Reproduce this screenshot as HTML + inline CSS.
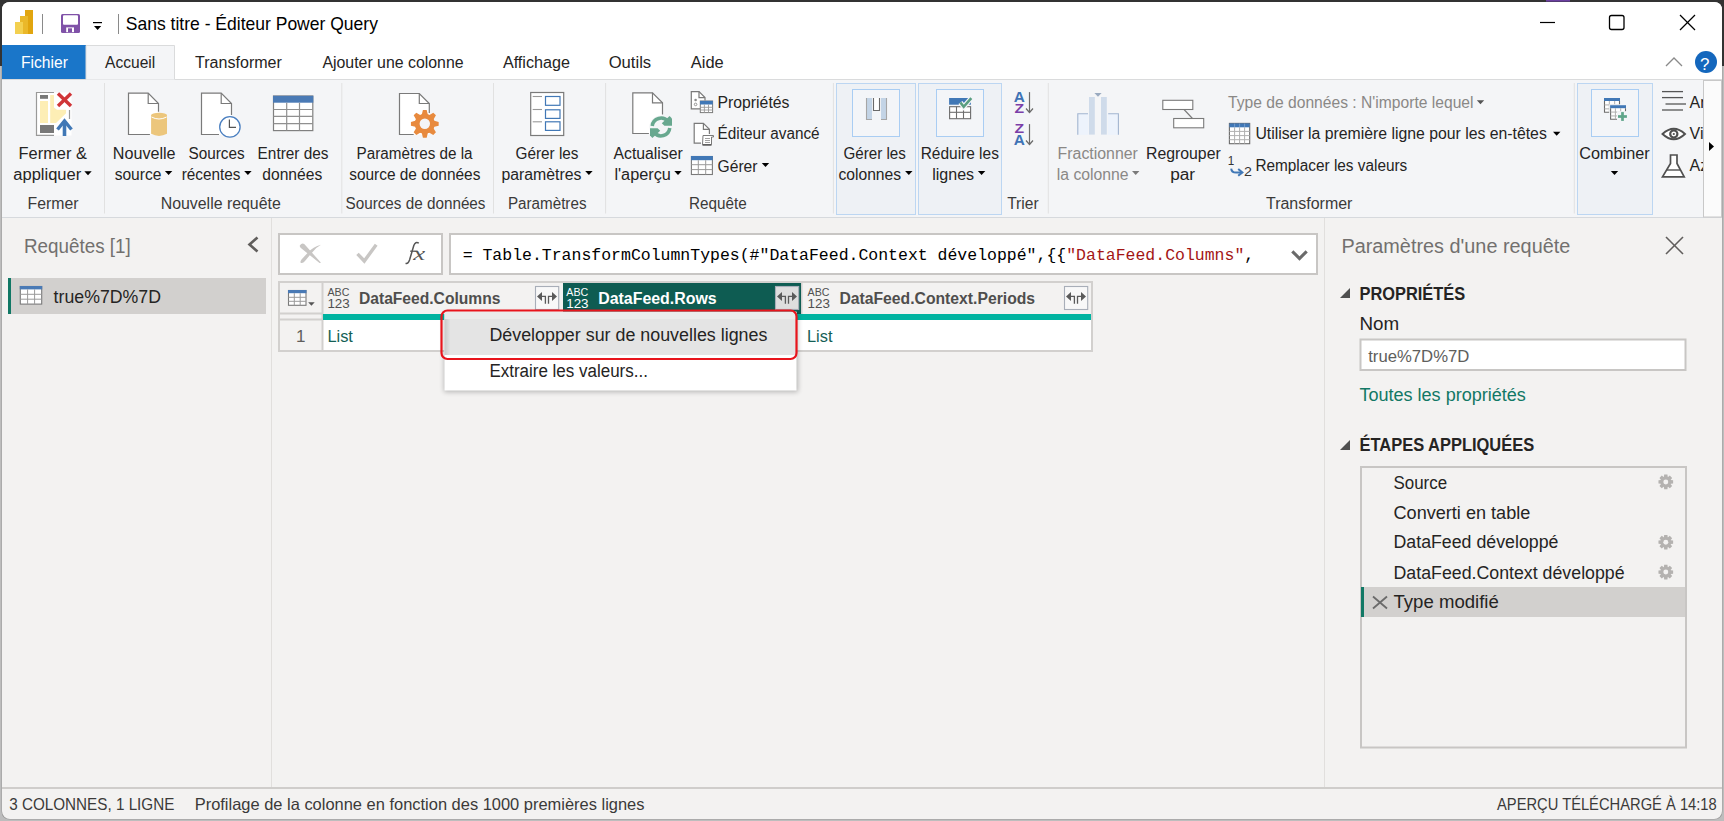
<!DOCTYPE html>
<html><head><meta charset="utf-8"><title>Power Query</title>
<style>
html,body{margin:0;padding:0;width:1724px;height:821px;overflow:hidden;background:#a9a9a9}
svg{display:block;font-family:"Liberation Sans", sans-serif}
</style></head><body>
<svg width="1724" height="821" viewBox="0 0 1724 821" fill="#252423">
<rect x="0" y="0" width="1724" height="821" fill="#bdbdbd" />
<rect x="0" y="0" width="1724" height="66" fill="#333333" />
<rect x="1546" y="0" width="24" height="1.6" fill="#6b3fa0" />
<path d="M1.5 66 L1.5 811 Q1.5 819.5 10 819.5 L1714 819.5 Q1722.5 819.5 1722.5 811 L1722.5 66 Z" fill="#9a9a9a" />
<rect x="2" y="2" width="1720" height="817" fill="#f3f2f1" rx="8" />
<path d="M2 10 Q2 2 10 2 L1714 2 Q1722 2 1722 10 L1722 79 L2 79 Z" fill="#ffffff" />
<rect x="2" y="79" width="1720" height="138" fill="#f4f5f7" />
<line x1="2" y1="79.5" x2="1722" y2="79.5" stroke="#dadbdc" stroke-width="1" />
<line x1="2" y1="217.5" x2="1722" y2="217.5" stroke="#d6d9dd" stroke-width="1" />
<rect x="25" y="10" width="8" height="24" fill="#e1a50f" />
<rect x="20" y="16" width="8" height="18" fill="#eab82a" />
<rect x="15" y="22" width="8" height="12" fill="#f3d050" />
<line x1="42.5" y1="14" x2="42.5" y2="34" stroke="#8a8a8a" stroke-width="1" />
<rect x="61" y="14" width="19" height="19" fill="#8052a8" rx="1.5" />
<rect x="63" y="15.2" width="15" height="9.6" fill="#ffffff" rx="1" />
<rect x="66.2" y="27.4" width="7.8" height="4.8" fill="#ffffff" />
<rect x="68" y="28.3" width="4" height="4" fill="#8052a8" />
<rect x="93" y="22" width="9" height="1.2" fill="#000" />
<path d="M94 26 L101.2 26 L97.6 30 Z" fill="#000" />
<line x1="118.5" y1="14" x2="118.5" y2="34" stroke="#8a8a8a" stroke-width="1" />
<text x="125.8" y="30.0" font-size="19" textLength="252.1" lengthAdjust="spacingAndGlyphs" fill="#000" >Sans titre - Éditeur Power Query</text>
<line x1="1540" y1="22.5" x2="1555" y2="22.5" stroke="#000" stroke-width="1.2" />
<rect x="1609.5" y="15.5" width="14.5" height="14" fill="none" stroke="#000" stroke-width="1.3" rx="2" />
<line x1="1680" y1="15" x2="1695" y2="30" stroke="#000" stroke-width="1.3" />
<line x1="1695" y1="15" x2="1680" y2="30" stroke="#000" stroke-width="1.3" />
<rect x="2" y="45" width="84" height="34" fill="#1a76c9" />
<rect x="86" y="45" width="88.5" height="34.5" fill="#f4f5f7" />
<path d="M86 79 L86 45.5 L174.5 45.5 L174.5 79" fill="none" stroke="#dadbdc" stroke-width="1" />
<text x="21.0" y="68.0" font-size="16" textLength="46.9" lengthAdjust="spacingAndGlyphs" fill="#ffffff" >Fichier</text>
<text x="105.1" y="68.0" font-size="16" textLength="50.1" lengthAdjust="spacingAndGlyphs" >Accueil</text>
<text x="195.0" y="68.0" font-size="16" textLength="86.9" lengthAdjust="spacingAndGlyphs" >Transformer</text>
<text x="322.4" y="68.0" font-size="16" textLength="141.2" lengthAdjust="spacingAndGlyphs" >Ajouter une colonne</text>
<text x="502.9" y="68.0" font-size="16" textLength="67.1" lengthAdjust="spacingAndGlyphs" >Affichage</text>
<text x="608.7" y="68.0" font-size="16" textLength="42.5" lengthAdjust="spacingAndGlyphs" >Outils</text>
<text x="690.8" y="68.0" font-size="16" textLength="32.9" lengthAdjust="spacingAndGlyphs" >Aide</text>
<path d="M1666 66 L1674 58 L1682 66" fill="none" stroke="#8a8a8a" stroke-width="1.3" />
<circle cx="1706" cy="62" r="11" fill="#1467bd"/>
<text x="1700.0" y="69.5" font-size="17" fill="#ffffff" >?</text>
<line x1="104.5" y1="83" x2="104.5" y2="213.5" stroke="#e1e1e1" stroke-width="1" />
<line x1="341.8" y1="83" x2="341.8" y2="213.5" stroke="#e1e1e1" stroke-width="1" />
<line x1="493.5" y1="83" x2="493.5" y2="213.5" stroke="#e1e1e1" stroke-width="1" />
<line x1="605.6" y1="83" x2="605.6" y2="213.5" stroke="#e1e1e1" stroke-width="1" />
<line x1="833.4" y1="83" x2="833.4" y2="213.5" stroke="#e1e1e1" stroke-width="1" />
<line x1="1048.3" y1="83" x2="1048.3" y2="213.5" stroke="#e1e1e1" stroke-width="1" />
<line x1="1574.3" y1="83" x2="1574.3" y2="213.5" stroke="#e1e1e1" stroke-width="1" />
<text x="18.6" y="158.8" font-size="16" textLength="68.3" lengthAdjust="spacingAndGlyphs" >Fermer &amp;</text>
<text x="13.3" y="179.5" font-size="16" textLength="67.9" lengthAdjust="spacingAndGlyphs" >appliquer</text>
<path d="M84.3 171.3 L91.7 171.3 L88.0 175.3 Z" fill="#000" />
<text x="27.6" y="208.6" font-size="16" textLength="50.9" lengthAdjust="spacingAndGlyphs" fill="#3b3a39" >Fermer</text>
<text x="112.8" y="158.8" font-size="16" textLength="62.8" lengthAdjust="spacingAndGlyphs" >Nouvelle</text>
<text x="114.7" y="179.5" font-size="16" textLength="46.7" lengthAdjust="spacingAndGlyphs" >source</text>
<path d="M164.9 171.1 L172.3 171.1 L168.6 175.1 Z" fill="#000" />
<text x="188.5" y="158.8" font-size="16" textLength="56.1" lengthAdjust="spacingAndGlyphs" >Sources</text>
<text x="181.7" y="179.5" font-size="16" textLength="58.7" lengthAdjust="spacingAndGlyphs" >récentes</text>
<path d="M244.2 171.1 L251.6 171.1 L247.9 175.1 Z" fill="#000" />
<text x="257.6" y="158.8" font-size="16" textLength="70.9" lengthAdjust="spacingAndGlyphs" >Entrer des</text>
<text x="262.3" y="179.5" font-size="16" textLength="59.9" lengthAdjust="spacingAndGlyphs" >données</text>
<text x="160.7" y="208.6" font-size="16" textLength="120.1" lengthAdjust="spacingAndGlyphs" fill="#3b3a39" >Nouvelle requête</text>
<text x="356.6" y="158.8" font-size="16" textLength="116.0" lengthAdjust="spacingAndGlyphs" >Paramètres de la</text>
<text x="349.2" y="179.5" font-size="16" textLength="131.2" lengthAdjust="spacingAndGlyphs" >source de données</text>
<text x="345.5" y="208.6" font-size="16" textLength="140.0" lengthAdjust="spacingAndGlyphs" fill="#3b3a39" >Sources de données</text>
<text x="515.5" y="158.8" font-size="16" textLength="63.0" lengthAdjust="spacingAndGlyphs" >Gérer les</text>
<text x="501.4" y="179.5" font-size="16" textLength="80.0" lengthAdjust="spacingAndGlyphs" >paramètres</text>
<path d="M585.2 171.1 L592.6 171.1 L588.9 175.1 Z" fill="#000" />
<text x="507.9" y="208.6" font-size="16" textLength="78.6" lengthAdjust="spacingAndGlyphs" fill="#3b3a39" >Paramètres</text>
<text x="613.5" y="158.8" font-size="16" textLength="69.3" lengthAdjust="spacingAndGlyphs" >Actualiser</text>
<text x="614.4" y="179.5" font-size="16" textLength="56.5" lengthAdjust="spacingAndGlyphs" >l&#x27;aperçu</text>
<path d="M674.3 171.1 L681.7 171.1 L678.0 175.1 Z" fill="#000" />
<text x="717.6" y="107.9" font-size="16" textLength="71.8" lengthAdjust="spacingAndGlyphs" >Propriétés</text>
<text x="717.6" y="139.4" font-size="16" textLength="102.0" lengthAdjust="spacingAndGlyphs" >Éditeur avancé</text>
<text x="717.6" y="171.5" font-size="16" textLength="39.9" lengthAdjust="spacingAndGlyphs" >Gérer</text>
<path d="M761.8 163 L769.2 163 L765.5 167 Z" fill="#000" />
<text x="689.0" y="208.6" font-size="16" textLength="57.7" lengthAdjust="spacingAndGlyphs" fill="#3b3a39" >Requête</text>
<rect x="836.5" y="83.5" width="79" height="131" fill="#eef1f5" stroke="#bcd6f2" stroke-width="1" />
<rect x="918.5" y="83.5" width="83" height="131" fill="#eef1f5" stroke="#bcd6f2" stroke-width="1" />
<rect x="852.5" y="89.5" width="47" height="47" fill="#f3f5f8" stroke="#a9cdf3" stroke-width="1" />
<rect x="936.5" y="89.5" width="47" height="47" fill="#f3f5f8" stroke="#a9cdf3" stroke-width="1" />
<text x="843.5" y="158.8" font-size="16" textLength="62.4" lengthAdjust="spacingAndGlyphs" >Gérer les</text>
<text x="838.4" y="179.5" font-size="16" textLength="62.7" lengthAdjust="spacingAndGlyphs" >colonnes</text>
<path d="M905.1 171.1 L912.5 171.1 L908.8 175.1 Z" fill="#000" />
<text x="920.7" y="158.8" font-size="16" textLength="78.2" lengthAdjust="spacingAndGlyphs" >Réduire les</text>
<text x="932.2" y="179.5" font-size="16" textLength="41.9" lengthAdjust="spacingAndGlyphs" >lignes</text>
<path d="M977.9 171.1 L985.3 171.1 L981.6 175.1 Z" fill="#000" />
<text x="1007.2" y="208.6" font-size="16" textLength="31.4" lengthAdjust="spacingAndGlyphs" fill="#3b3a39" >Trier</text>
<text x="1057.6" y="158.8" font-size="16" textLength="80.3" lengthAdjust="spacingAndGlyphs" fill="#8a8886" >Fractionner</text>
<text x="1056.8" y="179.5" font-size="16" textLength="71.8" lengthAdjust="spacingAndGlyphs" fill="#8a8886" >la colonne</text>
<path d="M1132.0 171.1 L1139.4 171.1 L1135.7 175.1 Z" fill="#7a7a7a" />
<text x="1146.0" y="158.8" font-size="16" textLength="74.7" lengthAdjust="spacingAndGlyphs" >Regrouper</text>
<text x="1170.2" y="179.5" font-size="16" textLength="24.9" lengthAdjust="spacingAndGlyphs" >par</text>
<text x="1228.1" y="107.8" font-size="16" textLength="245.4" lengthAdjust="spacingAndGlyphs" fill="#8a8886" >Type de données : N&#x27;importe lequel</text>
<path d="M1476.8 100.2 L1484.2 100.2 L1480.5 104.2 Z" fill="#555" />
<text x="1255.4" y="139.4" font-size="16" textLength="291.4" lengthAdjust="spacingAndGlyphs" >Utiliser la première ligne pour les en-têtes</text>
<path d="M1553.0 131.8 L1560.4 131.8 L1556.7 135.8 Z" fill="#000" />
<text x="1255.4" y="171.4" font-size="16" textLength="151.9" lengthAdjust="spacingAndGlyphs" >Remplacer les valeurs</text>
<text x="1266.0" y="208.6" font-size="16" textLength="86.4" lengthAdjust="spacingAndGlyphs" fill="#3b3a39" >Transformer</text>
<rect x="1577.5" y="83.5" width="75" height="131" fill="#eef1f5" stroke="#bcd6f2" stroke-width="1" />
<rect x="1591.5" y="89.5" width="47" height="47" fill="#f3f5f8" stroke="#a9cdf3" stroke-width="1" />
<text x="1579.3" y="158.8" font-size="16" textLength="70.4" lengthAdjust="spacingAndGlyphs" >Combiner</text>
<path d="M1610.8 171 L1618.2 171 L1614.5 175 Z" fill="#000" />
<clipPath id="cr"><rect x="1686" y="80" width="17.5" height="137"/></clipPath>
<g clip-path="url(#cr)">
<text x="1689.6" y="107.8" font-size="16" >Analyser</text>
<text x="1689.6" y="139.4" font-size="16" >Vision</text>
<text x="1689.6" y="171.4" font-size="16" >Azure</text>
</g>
<rect x="1703.5" y="80.5" width="18" height="136.5" fill="#fbfbfb" stroke="#c8c8c8" stroke-width="1" />
<path d="M1709 142 L1714 146.5 L1709 151 Z" fill="#000" />
<rect x="36.5" y="92.5" width="35" height="43" fill="#ffffff" />
<path d="M54 92.5 L36.5 92.5 L36.5 135.3 L54 135.3" fill="none" stroke="#999" stroke-width="1.2" />
<line x1="69.5" y1="110" x2="69.5" y2="119" stroke="#999" stroke-width="1.2" />
<rect x="40" y="95" width="8" height="3.8" fill="#787878" />
<rect x="40" y="101" width="8" height="22" fill="#fdeeb5" />
<path d="M50.2 95 L54 95 L54 107.5 L57 109.8 L66.1 109.8 L66.1 113.3 L56 122.9 L50.2 122.9 Z" fill="#fdeeb5" />
<rect x="40" y="125" width="14" height="8" fill="#787878" />
<line x1="58" y1="93.5" x2="71" y2="106" stroke="#d03538" stroke-width="3.4" />
<line x1="71" y1="93.5" x2="58" y2="106" stroke="#d03538" stroke-width="3.4" />
<path d="M57.5 129.5 L64.5 121 L71.5 129.5" fill="none" stroke="#4178b6" stroke-width="3.4" />
<line x1="64.5" y1="122" x2="64.5" y2="136" stroke="#4178b6" stroke-width="3.6" />
<path d="M128.5 93.2 L148.2 93.2 L158.5 103.5 L158.5 134.5 L128.5 134.5 Z" fill="#ffffff" />
<path d="M149.9 134.5 L128.5 134.5 L128.5 93.2 L148.2 93.2 L158.5 103.5 L158.5 111.7" fill="none" stroke="#7a7a7a" stroke-width="1.2" />
<path d="M148.2 93.2 L148.2 103.5 L158.5 103.5" fill="none" stroke="#7a7a7a" stroke-width="1.2" />
<path d="M151.1 115.3 L151.1 133.8 Q159 138 167 133.8 L167 115.3 Z" fill="#ecc67c" />
<ellipse cx="159.05" cy="115.3" rx="7.95" ry="2.6" fill="#ecc67c"/>
<path d="M151.5 117 Q159 121 166.6 117" fill="none" stroke="#ffffff" stroke-width="1" />
<path d="M201.5 93.2 L221.2 93.2 L231.5 103.5 L231.5 134.5 L201.5 134.5 Z" fill="#ffffff" />
<path d="M219 134.5 L201.5 134.5 L201.5 93.2 L221.2 93.2 L231.5 103.5 L231.5 115" fill="none" stroke="#7a7a7a" stroke-width="1.2" />
<path d="M221.2 93.2 L221.2 103.5 L231.5 103.5" fill="none" stroke="#7a7a7a" stroke-width="1.2" />
<circle cx="229.9" cy="126.9" r="10.2" fill="#ffffff" stroke="#4a7fc0" stroke-width="1.3"/>
<path d="M229.4 119.5 L229.4 127.4 L236 127.4" fill="none" stroke="#555" stroke-width="1.2" />
<rect x="273.5" y="96" width="39.3" height="34.6" fill="#ffffff" stroke="#808080" stroke-width="1.2" />
<rect x="273" y="95.8" width="40.3" height="6.9" fill="#4a7ab5" />
<line x1="286.7" y1="102.7" x2="286.7" y2="130.6" stroke="#909090" stroke-width="1.2" />
<line x1="299.5" y1="102.7" x2="299.5" y2="130.6" stroke="#909090" stroke-width="1.2" />
<line x1="273.5" y1="109.5" x2="312.8" y2="109.5" stroke="#909090" stroke-width="1.2" />
<line x1="273.5" y1="116.4" x2="312.8" y2="116.4" stroke="#909090" stroke-width="1.2" />
<line x1="273.5" y1="123.7" x2="312.8" y2="123.7" stroke="#909090" stroke-width="1.2" />
<path d="M399.5 93.5 L419.3 93.5 L429.3 103.5 L429.3 134.5 L399.5 134.5 Z" fill="#ffffff" />
<path d="M413.7 134.5 L399.5 134.5 L399.5 93.5 L419.3 93.5 L429.3 103.5 L429.3 113" fill="none" stroke="#7a7a7a" stroke-width="1.2" />
<path d="M419.3 93.5 L419.3 103.5 L429.3 103.5" fill="none" stroke="#7a7a7a" stroke-width="1.2" />
<path d="M434.35 120.84 L438.67 121.92 L438.67 125.68 L434.35 126.76 L433.64 128.47 L435.94 132.28 L433.28 134.94 L429.47 132.64 L427.76 133.35 L426.68 137.67 L422.92 137.67 L421.84 133.35 L420.13 132.64 L416.32 134.94 L413.66 132.28 L415.96 128.47 L415.25 126.76 L410.93 125.68 L410.93 121.92 L415.25 120.84 L415.96 119.13 L413.66 115.32 L416.32 112.66 L420.13 114.96 L421.84 114.25 L422.92 109.93 L426.68 109.93 L427.76 114.25 L429.47 114.96 L433.28 112.66 L435.94 115.32 L433.64 119.13 Z" fill="#e88a3e" />
<circle cx="424.8" cy="123.8" r="9.80" fill="#e88a3e"/>
<circle cx="424.8" cy="123.8" r="5.2" fill="#f4f5f7"/>
<rect x="530.7" y="92.5" width="33" height="43" fill="#ffffff" stroke="#7a7a7a" stroke-width="1.2" />
<line x1="532.7" y1="96.5" x2="542" y2="96.5" stroke="#999" stroke-width="1.1" />
<line x1="532.7" y1="109.5" x2="542" y2="109.5" stroke="#999" stroke-width="1.1" />
<line x1="532.7" y1="121.8" x2="542" y2="121.8" stroke="#999" stroke-width="1.1" />
<rect x="545.5" y="96.5" width="14.5" height="8.799999999999997" fill="#ffffff" stroke="#4178b6" stroke-width="1.2" />
<rect x="545.5" y="109.8" width="14.5" height="8.600000000000009" fill="#ffffff" stroke="#4178b6" stroke-width="1.2" />
<rect x="545.5" y="121.8" width="14.5" height="8.600000000000009" fill="#ffffff" stroke="#4178b6" stroke-width="1.2" />
<path d="M632.8 92.8 L652.5 92.8 L662.5 102.8 L662.5 133.5 L632.8 133.5 Z" fill="#ffffff" />
<path d="M648.9 133.5 L632.8 133.5 L632.8 92.8 L652.5 92.8 L662.5 102.8 L662.5 114.6" fill="none" stroke="#7a7a7a" stroke-width="1.2" />
<path d="M652.5 92.8 L652.5 102.8 L662.5 102.8" fill="none" stroke="#7a7a7a" stroke-width="1.2" />
<circle cx="661" cy="127" r="11.6" fill="#f4f5f7"/>
<path d="M652.25 126 A8.75 8.75 0 0 1 667.90 121.61" fill="none" stroke="#68a88f" stroke-width="3.5" />
<path d="M669.6 116 L672 118.4 L672 125.8 L664.4 125.8 L661.8 123.2 Z" fill="#68a88f" />
<path d="M669.75 128 A8.75 8.75 0 0 1 654.10 132.39" fill="none" stroke="#68a88f" stroke-width="3.5" />
<path d="M652.4 138 L650 135.6 L650 128.2 L657.6 128.2 L660.2 130.8 Z" fill="#68a88f" />
<path d="M691.3 91.6 L699 91.6 L705 97.6 L705 108.8 L691.3 108.8 Z" fill="#ffffff" />
<path d="M700 108.8 L691.3 108.8 L691.3 91.6 L699 91.6 L705 97.6 L705 100.5" fill="none" stroke="#7a7a7a" stroke-width="1.2" />
<path d="M699 91.6 L699 97.6 L705 97.6" fill="none" stroke="#7a7a7a" stroke-width="1.2" />
<circle cx="695.6" cy="100" r="1.3" fill="#8a8a8a"/>
<circle cx="695.6" cy="104.4" r="1.3" fill="none" stroke="#8a8a8a" stroke-width="0.9"/>
<rect x="700.3" y="101" width="12.3" height="11.6" fill="#ffffff" stroke="#7a7a7a" stroke-width="1" />
<rect x="700" y="100.9" width="12.8" height="3.6" fill="#4178b6" />
<line x1="704.4" y1="104.5" x2="704.4" y2="112.6" stroke="#9a9a9a" stroke-width="0.9" />
<line x1="708.5" y1="104.5" x2="708.5" y2="112.6" stroke="#9a9a9a" stroke-width="0.9" />
<line x1="700.3" y1="107.3" x2="712.6" y2="107.3" stroke="#9a9a9a" stroke-width="0.9" />
<line x1="700.3" y1="110" x2="712.6" y2="110" stroke="#9a9a9a" stroke-width="0.9" />
<path d="M694.2 123.3 L703.4 123.3 L709.4 129.3 L709.4 143.2 L694.2 143.2 Z" fill="#ffffff" />
<path d="M701 143.2 L694.2 143.2 L694.2 123.3 L703.4 123.3 L709.4 129.3 L709.4 134" fill="none" stroke="#7a7a7a" stroke-width="1.2" />
<path d="M703.4 123.3 L703.4 129.3 L709.4 129.3" fill="none" stroke="#7a7a7a" stroke-width="1.2" />
<path d="M703 135.5 L713.5 135.5 L713.5 137 L711.5 137 L711.5 144.5 L702.5 144.5 Z" fill="#ffffff" stroke="#7a7a7a" stroke-width="1" />
<line x1="702.5" y1="145" x2="711.5" y2="145" stroke="#555" stroke-width="1.4" />
<line x1="705" y1="138.5" x2="710" y2="138.5" stroke="#8a8a8a" stroke-width="0.8" />
<line x1="705" y1="140.5" x2="710" y2="140.5" stroke="#8a8a8a" stroke-width="0.8" />
<line x1="705" y1="142.5" x2="710" y2="142.5" stroke="#8a8a8a" stroke-width="0.8" />
<rect x="691.4" y="156.5" width="21" height="18" fill="#ffffff" stroke="#7a7a7a" stroke-width="1.1" />
<rect x="691" y="156" width="21.8" height="4.2" fill="#4178b6" />
<line x1="698.3" y1="160.2" x2="698.3" y2="174.5" stroke="#9a9a9a" stroke-width="1" />
<line x1="705.7" y1="160.2" x2="705.7" y2="174.5" stroke="#9a9a9a" stroke-width="1" />
<line x1="691.4" y1="164.7" x2="712.4" y2="164.7" stroke="#9a9a9a" stroke-width="1" />
<line x1="691.4" y1="169.6" x2="712.4" y2="169.6" stroke="#9a9a9a" stroke-width="1" />
<rect x="866" y="98" width="6" height="22" fill="#c3d4e6" />
<path d="M866.5 98 L866.5 119.5 L872 119.5" fill="none" stroke="#a6a6a6" stroke-width="1.1" />
<rect x="881" y="98" width="6" height="22" fill="#c3d4e6" />
<path d="M881 119.5 L886.5 119.5 L886.5 98" fill="none" stroke="#a6a6a6" stroke-width="1.1" />
<path d="M873.5 98 L873.5 110.5 L879.5 110.5 L879.5 98" fill="#ffffff" stroke="#6a6a6a" stroke-width="1.1" />
<rect x="949.1" y="98" width="21.8" height="6.7" fill="#4178b6" />
<rect x="949.6" y="106.7" width="21" height="12" fill="#ffffff" stroke="#6d6d6d" stroke-width="1.1" />
<line x1="956.5" y1="106.7" x2="956.5" y2="118.7" stroke="#6d6d6d" stroke-width="1.1" />
<line x1="963.5" y1="106.7" x2="963.5" y2="118.7" stroke="#6d6d6d" stroke-width="1.1" />
<line x1="949.6" y1="112.3" x2="970.6" y2="112.3" stroke="#6d6d6d" stroke-width="1.1" />
<path d="M960.4 102.5 L963.7 106.8 L971.3 98.2" fill="none" stroke="#f3f5f8" stroke-width="5" />
<path d="M960.4 102.5 L963.7 106.8 L971.3 98.2" fill="none" stroke="#5a9e80" stroke-width="2.6" />
<text x="1013.8" y="101.9" font-size="14.5" textLength="11.1" lengthAdjust="spacingAndGlyphs" fill="#3f73b5" font-weight="bold" >A</text>
<text x="1014.5" y="112.8" font-size="13.5" textLength="9.6" lengthAdjust="spacingAndGlyphs" fill="#7b3fa8" font-weight="bold" >Z</text>
<line x1="1029.5" y1="92.1" x2="1029.5" y2="112.39999999999999" stroke="#6a6a6a" stroke-width="1.2" />
<path d="M1026 108.5 L1029.5 112.5 L1033 108.5" fill="none" stroke="#6a6a6a" stroke-width="1.2" />
<text x="1014.5" y="132.8" font-size="13.5" textLength="9.6" lengthAdjust="spacingAndGlyphs" fill="#7b3fa8" font-weight="bold" >Z</text>
<text x="1013.8" y="144.8" font-size="14.5" textLength="11.1" lengthAdjust="spacingAndGlyphs" fill="#3f73b5" font-weight="bold" >A</text>
<line x1="1029.5" y1="124.1" x2="1029.5" y2="144.4" stroke="#6a6a6a" stroke-width="1.2" />
<path d="M1026 140.5 L1029.5 144.5 L1033 140.5" fill="none" stroke="#6a6a6a" stroke-width="1.2" />
<rect x="1077.5" y="113.5" width="11" height="21.3" fill="#edf3fc" />
<rect x="1107.7" y="113.5" width="11" height="21.3" fill="#edf3fc" />
<path d="M1077.8 134.8 L1077.8 113.7 L1088 113.7" fill="none" stroke="#a3b5cf" stroke-width="1.1" />
<path d="M1108.2 113.7 L1118.4 113.7 L1118.4 134.8" fill="none" stroke="#a3b5cf" stroke-width="1.1" />
<rect x="1089" y="97" width="5.8" height="37.6" fill="#cfdbea" />
<rect x="1101" y="97" width="5.8" height="37.6" fill="#cfdbea" />
<path d="M1094.4 93 L1101.6 93 L1098 96.8 Z" fill="#9aaac0" />
<rect x="1162.8" y="100.3" width="30" height="9.2" fill="#ffffff" stroke="#7a7a7a" stroke-width="1.1" />
<rect x="1173.7" y="118.5" width="30" height="9.3" fill="#ffffff" stroke="#7a7a7a" stroke-width="1.1" />
<line x1="1184" y1="109.5" x2="1192.5" y2="118.5" stroke="#7a7a7a" stroke-width="1.1" />
<rect x="1229.4" y="123.4" width="20.3" height="20.3" fill="#ffffff" stroke="#6a6a6a" stroke-width="1.1" />
<rect x="1229.4" y="123.4" width="20.3" height="3.9" fill="#4178b6" />
<line x1="1234.6" y1="127.3" x2="1234.6" y2="143.6" stroke="#b0b0b0" stroke-width="1" />
<line x1="1234.6" y1="123.6" x2="1234.6" y2="127.2" stroke="#7fa3d0" stroke-width="0.8" />
<line x1="1239.6" y1="127.3" x2="1239.6" y2="143.6" stroke="#b0b0b0" stroke-width="1" />
<line x1="1239.6" y1="123.6" x2="1239.6" y2="127.2" stroke="#7fa3d0" stroke-width="0.8" />
<line x1="1244.6" y1="127.3" x2="1244.6" y2="143.6" stroke="#b0b0b0" stroke-width="1" />
<line x1="1244.6" y1="123.6" x2="1244.6" y2="127.2" stroke="#7fa3d0" stroke-width="0.8" />
<line x1="1229.4" y1="131.4" x2="1249.7" y2="131.4" stroke="#b0b0b0" stroke-width="1" />
<line x1="1229.4" y1="135.6" x2="1249.7" y2="135.6" stroke="#b0b0b0" stroke-width="1" />
<line x1="1229.4" y1="139.7" x2="1249.7" y2="139.7" stroke="#b0b0b0" stroke-width="1" />
<text x="1227.8" y="164.8" font-size="12.5" textLength="6.5" lengthAdjust="spacingAndGlyphs" fill="#333" >1</text>
<text x="1244.0" y="176.0" font-size="12.5" textLength="7.9" lengthAdjust="spacingAndGlyphs" fill="#333" >2</text>
<path d="M1231.2 168.6 Q1231.6 172.6 1236 172.6 L1241.5 172.4" fill="none" stroke="#4178b6" stroke-width="2" />
<path d="M1238.2 169 L1242.4 172.4 L1238.2 175.8" fill="none" stroke="#4178b6" stroke-width="2" />
<rect x="1604" y="98" width="16" height="14.799999999999997" fill="#ffffff" />
<rect x="1604" y="98" width="16" height="3" fill="#4178b6" />
<path d="M1604.5 101 L1604.5 112.3 L1619.5 112.3 L1619.5 101" fill="none" stroke="#6a6a6a" stroke-width="1.1" />
<line x1="1609.3333333333333" y1="101" x2="1609.3333333333333" y2="112.3" stroke="#b0b0b0" stroke-width="1" />
<line x1="1614.6666666666667" y1="101" x2="1614.6666666666667" y2="112.3" stroke="#b0b0b0" stroke-width="1" />
<line x1="1604.5" y1="104.93333333333334" x2="1619.5" y2="104.93333333333334" stroke="#b0b0b0" stroke-width="1" />
<line x1="1604.5" y1="108.86666666666666" x2="1619.5" y2="108.86666666666666" stroke="#b0b0b0" stroke-width="1" />
<rect x="1609.2" y="104.3" width="18" height="16.5" fill="#f3f5f8" />
<rect x="1610.1" y="105.2" width="15.900000000000091" height="14.599999999999994" fill="#ffffff" />
<rect x="1610.1" y="105.2" width="15.900000000000091" height="3" fill="#4178b6" />
<path d="M1610.6 108.2 L1610.6 119.3 L1625.5 119.3 L1625.5 108.2" fill="none" stroke="#6a6a6a" stroke-width="1.1" />
<line x1="1615.3999999999999" y1="108.2" x2="1615.3999999999999" y2="119.3" stroke="#b0b0b0" stroke-width="1" />
<line x1="1620.7" y1="108.2" x2="1620.7" y2="119.3" stroke="#b0b0b0" stroke-width="1" />
<line x1="1610.6" y1="112.06666666666666" x2="1625.5" y2="112.06666666666666" stroke="#b0b0b0" stroke-width="1" />
<line x1="1610.6" y1="115.93333333333334" x2="1625.5" y2="115.93333333333334" stroke="#b0b0b0" stroke-width="1" />
<rect x="1617" y="111.2" width="11" height="10.5" fill="#f3f5f8" />
<rect x="1618" y="115.15" width="8.9" height="2.7" fill="#5fa58a" />
<rect x="1621.15" y="112.1" width="2.7" height="8.8" fill="#5fa58a" />
<line x1="1662" y1="91.6" x2="1683" y2="91.6" stroke="#555" stroke-width="1.3" />
<line x1="1662" y1="97.6" x2="1683" y2="97.6" stroke="#555" stroke-width="1.3" />
<line x1="1665.5" y1="104" x2="1686" y2="104" stroke="#555" stroke-width="1.3" />
<line x1="1662" y1="110" x2="1683" y2="110" stroke="#555" stroke-width="1.3" />
<path d="M1662.5 134 Q1673.8 123.5 1685 134 Q1673.8 144.5 1662.5 134 Z" fill="#ffffff" stroke="#505050" stroke-width="1.9" />
<circle cx="1673.8" cy="134" r="3.6" fill="none" stroke="#505050" stroke-width="2.2"/>
<circle cx="1673.8" cy="134" r="1.1" fill="#505050"/>
<path d="M1670.5 155 L1677 155 L1677 163.5 L1684.2 176.8 L1662.5 176.8 L1670.5 163.5 Z" fill="#ffffff" stroke="#505050" stroke-width="1.7" />
<line x1="1666" y1="170" x2="1681" y2="170" stroke="#505050" stroke-width="1.4" />
<line x1="271.5" y1="218" x2="271.5" y2="787" stroke="#e1dfdd" stroke-width="1" />
<text x="24.0" y="252.7" font-size="20" textLength="106.7" lengthAdjust="spacingAndGlyphs" fill="#72706e" >Requêtes [1]</text>
<path d="M257.5 237.5 L249.5 244.5 L257.5 251.5" fill="none" stroke="#605e5c" stroke-width="2.6" />
<rect x="8" y="278" width="258" height="36" fill="#d2d0ce" />
<rect x="8" y="278" width="3" height="36" fill="#117865" />
<rect x="20.3" y="286.5" width="21.4" height="17.6" fill="#ffffff" stroke="#7a7a7a" stroke-width="1.1" />
<rect x="19.8" y="286" width="22.4" height="3.4" fill="#4a7ab5" />
<line x1="27.6" y1="289.4" x2="27.6" y2="304" stroke="#9a9a9a" stroke-width="1" />
<line x1="34.6" y1="289.4" x2="34.6" y2="304" stroke="#9a9a9a" stroke-width="1" />
<line x1="20.3" y1="294.3" x2="41.7" y2="294.3" stroke="#9a9a9a" stroke-width="1" />
<line x1="20.3" y1="299.2" x2="41.7" y2="299.2" stroke="#9a9a9a" stroke-width="1" />
<text x="53.6" y="303.2" font-size="19" textLength="107.4" lengthAdjust="spacingAndGlyphs" >true%7D%7D</text>
<rect x="279" y="234" width="163" height="40" fill="#ffffff" stroke="#c8c6c4" stroke-width="2" />
<path d="M300 245.2 Q302 242.5 304.5 244.2 L321 262.8 L319.5 263 L301.5 248.5 Q299 246.5 300 245.2 Z" fill="#c8c6c4" />
<path d="M321 244.8 Q313 247 308 252.5 L301.5 259.5 Q299.5 262.5 301.2 263 Q303 263.6 305 261 L311.5 253.2 Q315 248 321 244.8 Z" fill="#c8c6c4" />
<path d="M357.5 253.8 L364.3 261 L376.2 244.8" fill="none" stroke="#c8c6c4" stroke-width="3.4" />
<path d="M418.8 243.2 Q415.5 241.2 413.8 245.5 L409.6 259.8 Q408.2 264.2 405.6 263.2" fill="none" stroke="#555" stroke-width="1.5" />
<line x1="410.2" y1="251.2" x2="417.6" y2="251.2" stroke="#555" stroke-width="1.3" />
<text x="413.2" y="259.6" font-size="19" textLength="11.9" lengthAdjust="spacingAndGlyphs" fill="#555" font-family="'Liberation Serif', serif" font-style="italic">x</text>
<rect x="450" y="234" width="867" height="40" fill="#ffffff" stroke="#c8c6c4" stroke-width="2" />
<text x="462.7" y="260" font-size="16.5" textLength="791.5" lengthAdjust="spacingAndGlyphs" font-family="'Liberation Mono', monospace" fill="#000">= Table.TransformColumnTypes(#"DataFeed.Context développé",{{<tspan fill="#a31515">"DataFeed.Columns"</tspan>,</text>
<path d="M1292.3 251.3 L1299.5 258.5 L1306.7 251.3" fill="none" stroke="#6a6a6a" stroke-width="3.1" />
<rect x="279" y="282" width="813" height="69" fill="#ffffff" stroke="#d2d0ce" stroke-width="2" />
<rect x="280" y="283" width="42" height="67" fill="#f3f2f1" />
<rect x="323" y="283" width="768" height="31" fill="#f3f2f1" />
<line x1="322.5" y1="282" x2="322.5" y2="351" stroke="#d2d0ce" stroke-width="2" />
<line x1="279" y1="313.5" x2="322" y2="313.5" stroke="#d2d0ce" stroke-width="2" />
<line x1="279" y1="319.5" x2="322" y2="319.5" stroke="#d2d0ce" stroke-width="2" />
<line x1="801.5" y1="282" x2="801.5" y2="314" stroke="#d2d0ce" stroke-width="2" />
<rect x="323" y="314" width="768" height="6" fill="#00b3a0" />
<rect x="563" y="283" width="238" height="31" fill="#0e5c52" />
<rect x="288.5" y="290.5" width="17.5" height="14.8" fill="#ffffff" stroke="#7a7a7a" stroke-width="1.1" />
<rect x="288" y="290" width="18.5" height="3.2" fill="#4a7ab5" />
<line x1="294.3" y1="293.2" x2="294.3" y2="305.3" stroke="#9a9a9a" stroke-width="1" />
<line x1="300.2" y1="293.2" x2="300.2" y2="305.3" stroke="#9a9a9a" stroke-width="1" />
<line x1="288.5" y1="297.3" x2="306" y2="297.3" stroke="#9a9a9a" stroke-width="1" />
<line x1="288.5" y1="301.3" x2="306" y2="301.3" stroke="#9a9a9a" stroke-width="1" />
<path d="M308.2 302.3 L314.7 302.3 L311.45 305.8 Z" fill="#555" />
<text x="359.0" y="303.6" font-size="16" textLength="141.4" lengthAdjust="spacingAndGlyphs" fill="#4f4e4d" font-weight="bold" >DataFeed.Columns</text>
<text x="598.2" y="303.8" font-size="16" textLength="118.5" lengthAdjust="spacingAndGlyphs" fill="#ffffff" font-weight="bold" >DataFeed.Rows</text>
<text x="839.4" y="304.0" font-size="16" textLength="195.7" lengthAdjust="spacingAndGlyphs" fill="#4f4e4d" font-weight="bold" >DataFeed.Context.Periods</text>
<text x="327.5" y="295.8" font-size="11.6" textLength="21.9" lengthAdjust="spacingAndGlyphs" fill="#505050" >ABC</text>
<text x="327.4" y="307.6" font-size="13.6" textLength="22.4" lengthAdjust="spacingAndGlyphs" fill="#505050" >123</text>
<text x="566.3" y="295.8" font-size="11.6" textLength="21.9" lengthAdjust="spacingAndGlyphs" fill="#ffffff" >ABC</text>
<text x="566.2" y="307.6" font-size="13.6" textLength="22.4" lengthAdjust="spacingAndGlyphs" fill="#ffffff" >123</text>
<text x="807.6" y="295.8" font-size="11.6" textLength="21.9" lengthAdjust="spacingAndGlyphs" fill="#505050" >ABC</text>
<text x="807.5" y="307.6" font-size="13.6" textLength="22.4" lengthAdjust="spacingAndGlyphs" fill="#505050" >123</text>
<rect x="535.5" y="286.5" width="23.2" height="23" fill="#f8f8f8" stroke="#a8aeb8" stroke-width="1.1" />
<path d="M542 292 L537 296.5 L542 301 Z" fill="#5a5a5a" />
<path d="M552 292 L557 296.5 L552 301 Z" fill="#5a5a5a" />
<path d="M542 296.3 L545.4 296.3 L545.4 303.7" fill="none" stroke="#5a5a5a" stroke-width="1.3" />
<path d="M552 296.3 L548.5 296.3 L548.5 303.7" fill="none" stroke="#5a5a5a" stroke-width="1.3" />
<rect x="775.5" y="286.5" width="23.2" height="23" fill="#dedede" stroke="#a8aeb8" stroke-width="1.1" />
<path d="M782 292 L777 296.5 L782 301 Z" fill="#5a5a5a" />
<path d="M792 292 L797 296.5 L792 301 Z" fill="#5a5a5a" />
<path d="M782 296.3 L785.4 296.3 L785.4 303.7" fill="none" stroke="#5a5a5a" stroke-width="1.3" />
<path d="M792 296.3 L788.5 296.3 L788.5 303.7" fill="none" stroke="#5a5a5a" stroke-width="1.3" />
<rect x="1064.5" y="286.5" width="23.2" height="23" fill="#f8f8f8" stroke="#a8aeb8" stroke-width="1.1" />
<path d="M1071 292 L1066 296.5 L1071 301 Z" fill="#5a5a5a" />
<path d="M1081 292 L1086 296.5 L1081 301 Z" fill="#5a5a5a" />
<path d="M1071 296.3 L1074.4 296.3 L1074.4 303.7" fill="none" stroke="#5a5a5a" stroke-width="1.3" />
<path d="M1081 296.3 L1077.5 296.3 L1077.5 303.7" fill="none" stroke="#5a5a5a" stroke-width="1.3" />
<text x="296.1" y="341.8" font-size="17" fill="#605e5c" >1</text>
<text x="327.4" y="341.8" font-size="17" textLength="25.5" lengthAdjust="spacingAndGlyphs" fill="#155f56" >List</text>
<text x="807.0" y="341.8" font-size="17" textLength="25.5" lengthAdjust="spacingAndGlyphs" fill="#155f56" >List</text>
<filter id="sh" x="-10%" y="-30%" width="120%" height="160%"><feGaussianBlur stdDeviation="2.5"/></filter>
<rect x="444" y="313" width="354" height="79" fill="#000" opacity="0.25" filter="url(#sh)"/>
<rect x="444.5" y="311.5" width="352" height="79" fill="#ffffff" />
<rect x="444.5" y="312" width="352" height="7" fill="#ebebeb" />
<rect x="444.5" y="319" width="352" height="36" fill="#e4e4e4" />
<linearGradient id="lg" x1="0" x2="1" y1="0" y2="0"><stop offset="0" stop-color="#c8c8c8"/><stop offset="1" stop-color="#e4e4e4"/></linearGradient>
<rect x="444.5" y="319" width="6" height="36" fill="url(#lg)" />
<text x="489.4" y="340.8" font-size="18" textLength="278.0" lengthAdjust="spacingAndGlyphs" >Développer sur de nouvelles lignes</text>
<text x="489.4" y="376.7" font-size="18" textLength="158.5" lengthAdjust="spacingAndGlyphs" >Extraire les valeurs...</text>
<rect x="441.5" y="310.5" width="355" height="48.5" fill="none" stroke="#e8141c" stroke-width="2.2" rx="6" />
<line x1="1324.5" y1="218" x2="1324.5" y2="787" stroke="#e1dfdd" stroke-width="1" />
<text x="1341.4" y="252.8" font-size="20" textLength="228.9" lengthAdjust="spacingAndGlyphs" fill="#72706e" >Paramètres d&#x27;une requête</text>
<line x1="1666" y1="237" x2="1683" y2="254" stroke="#605e5c" stroke-width="1.6" />
<line x1="1683" y1="237" x2="1666" y2="254" stroke="#605e5c" stroke-width="1.6" />
<path d="M1340 298 L1350 288 L1350 298 Z" fill="#505050" />
<text x="1359.5" y="299.8" font-size="17.5" textLength="105.7" lengthAdjust="spacingAndGlyphs" font-weight="bold" >PROPRIÉTÉS</text>
<text x="1359.4" y="330.3" font-size="18" textLength="39.7" lengthAdjust="spacingAndGlyphs" >Nom</text>
<rect x="1360.5" y="339.5" width="325" height="30.5" fill="#ffffff" stroke="#c8c6c4" stroke-width="2" />
<text x="1368.2" y="361.6" font-size="17" textLength="101.2" lengthAdjust="spacingAndGlyphs" fill="#605e5c" >true%7D%7D</text>
<text x="1359.4" y="401.3" font-size="18" textLength="166.5" lengthAdjust="spacingAndGlyphs" fill="#117865" >Toutes les propriétés</text>
<path d="M1340 450 L1350 440 L1350 450 Z" fill="#505050" />
<text x="1359.5" y="451.4" font-size="17.5" textLength="174.7" lengthAdjust="spacingAndGlyphs" font-weight="bold" >ÉTAPES APPLIQUÉES</text>
<rect x="1361" y="467" width="325" height="280.5" fill="#f3f2f1" stroke="#c8c6c4" stroke-width="2" />
<rect x="1362" y="587" width="323" height="30" fill="#d2d0ce" />
<rect x="1361" y="587" width="3" height="30" fill="#117865" />
<text x="1393.5" y="488.7" font-size="17.5" textLength="53.6" lengthAdjust="spacingAndGlyphs" >Source</text>
<text x="1393.5" y="518.9" font-size="17.5" textLength="136.8" lengthAdjust="spacingAndGlyphs" >Converti en table</text>
<text x="1393.5" y="548.4" font-size="17.5" textLength="164.9" lengthAdjust="spacingAndGlyphs" >DataFeed développé</text>
<text x="1393.5" y="579.0" font-size="17.5" textLength="231.1" lengthAdjust="spacingAndGlyphs" >DataFeed.Context développé</text>
<text x="1393.5" y="608.2" font-size="17.5" textLength="105.3" lengthAdjust="spacingAndGlyphs" >Type modifié</text>
<line x1="1373" y1="596.5" x2="1387" y2="608.5" stroke="#6a6a6a" stroke-width="1.8" />
<line x1="1387" y1="596.5" x2="1373" y2="608.5" stroke="#6a6a6a" stroke-width="1.8" />
<path d="M1673.12 480.26 L1673.12 483.54 L1670.85 483.80 L1670.72 484.13 L1672.13 485.92 L1669.82 488.23 L1668.03 486.82 L1667.70 486.95 L1667.44 489.22 L1664.16 489.22 L1663.90 486.95 L1663.57 486.82 L1661.78 488.23 L1659.47 485.92 L1660.88 484.13 L1660.75 483.80 L1658.48 483.54 L1658.48 480.26 L1660.75 480.00 L1660.88 479.67 L1659.47 477.88 L1661.78 475.57 L1663.57 476.98 L1663.90 476.85 L1664.16 474.58 L1667.44 474.58 L1667.70 476.85 L1668.03 476.98 L1669.82 475.57 L1672.13 477.88 L1670.72 479.67 L1670.85 480.00 Z" fill="#b4b2b0" />
<circle cx="1665.8" cy="481.9" r="2.48" fill="#f3f2f1"/>
<path d="M1673.12 540.56 L1673.12 543.84 L1670.85 544.10 L1670.72 544.43 L1672.13 546.22 L1669.82 548.53 L1668.03 547.12 L1667.70 547.25 L1667.44 549.52 L1664.16 549.52 L1663.90 547.25 L1663.57 547.12 L1661.78 548.53 L1659.47 546.22 L1660.88 544.43 L1660.75 544.10 L1658.48 543.84 L1658.48 540.56 L1660.75 540.30 L1660.88 539.97 L1659.47 538.18 L1661.78 535.87 L1663.57 537.28 L1663.90 537.15 L1664.16 534.88 L1667.44 534.88 L1667.70 537.15 L1668.03 537.28 L1669.82 535.87 L1672.13 538.18 L1670.72 539.97 L1670.85 540.30 Z" fill="#b4b2b0" />
<circle cx="1665.8" cy="542.2" r="2.48" fill="#f3f2f1"/>
<path d="M1673.12 570.46 L1673.12 573.74 L1670.85 574.00 L1670.72 574.33 L1672.13 576.12 L1669.82 578.43 L1668.03 577.02 L1667.70 577.15 L1667.44 579.42 L1664.16 579.42 L1663.90 577.15 L1663.57 577.02 L1661.78 578.43 L1659.47 576.12 L1660.88 574.33 L1660.75 574.00 L1658.48 573.74 L1658.48 570.46 L1660.75 570.20 L1660.88 569.87 L1659.47 568.08 L1661.78 565.77 L1663.57 567.18 L1663.90 567.05 L1664.16 564.78 L1667.44 564.78 L1667.70 567.05 L1668.03 567.18 L1669.82 565.77 L1672.13 568.08 L1670.72 569.87 L1670.85 570.20 Z" fill="#b4b2b0" />
<circle cx="1665.8" cy="572.1" r="2.48" fill="#f3f2f1"/>
<line x1="2" y1="788" x2="1722" y2="788" stroke="#cfcdcb" stroke-width="2" />
<text x="9.2" y="809.5" font-size="16.5" textLength="165.2" lengthAdjust="spacingAndGlyphs" fill="#3b3a39" >3 COLONNES, 1 LIGNE</text>
<text x="194.7" y="809.5" font-size="16.5" textLength="449.8" lengthAdjust="spacingAndGlyphs" fill="#3b3a39" >Profilage de la colonne en fonction des 1000 premières lignes</text>
<text x="1497.0" y="809.7" font-size="16.5" textLength="219.7" lengthAdjust="spacingAndGlyphs" fill="#3b3a39" >APERÇU TÉLÉCHARGÉ À 14:18</text>
</svg>
</body></html>
